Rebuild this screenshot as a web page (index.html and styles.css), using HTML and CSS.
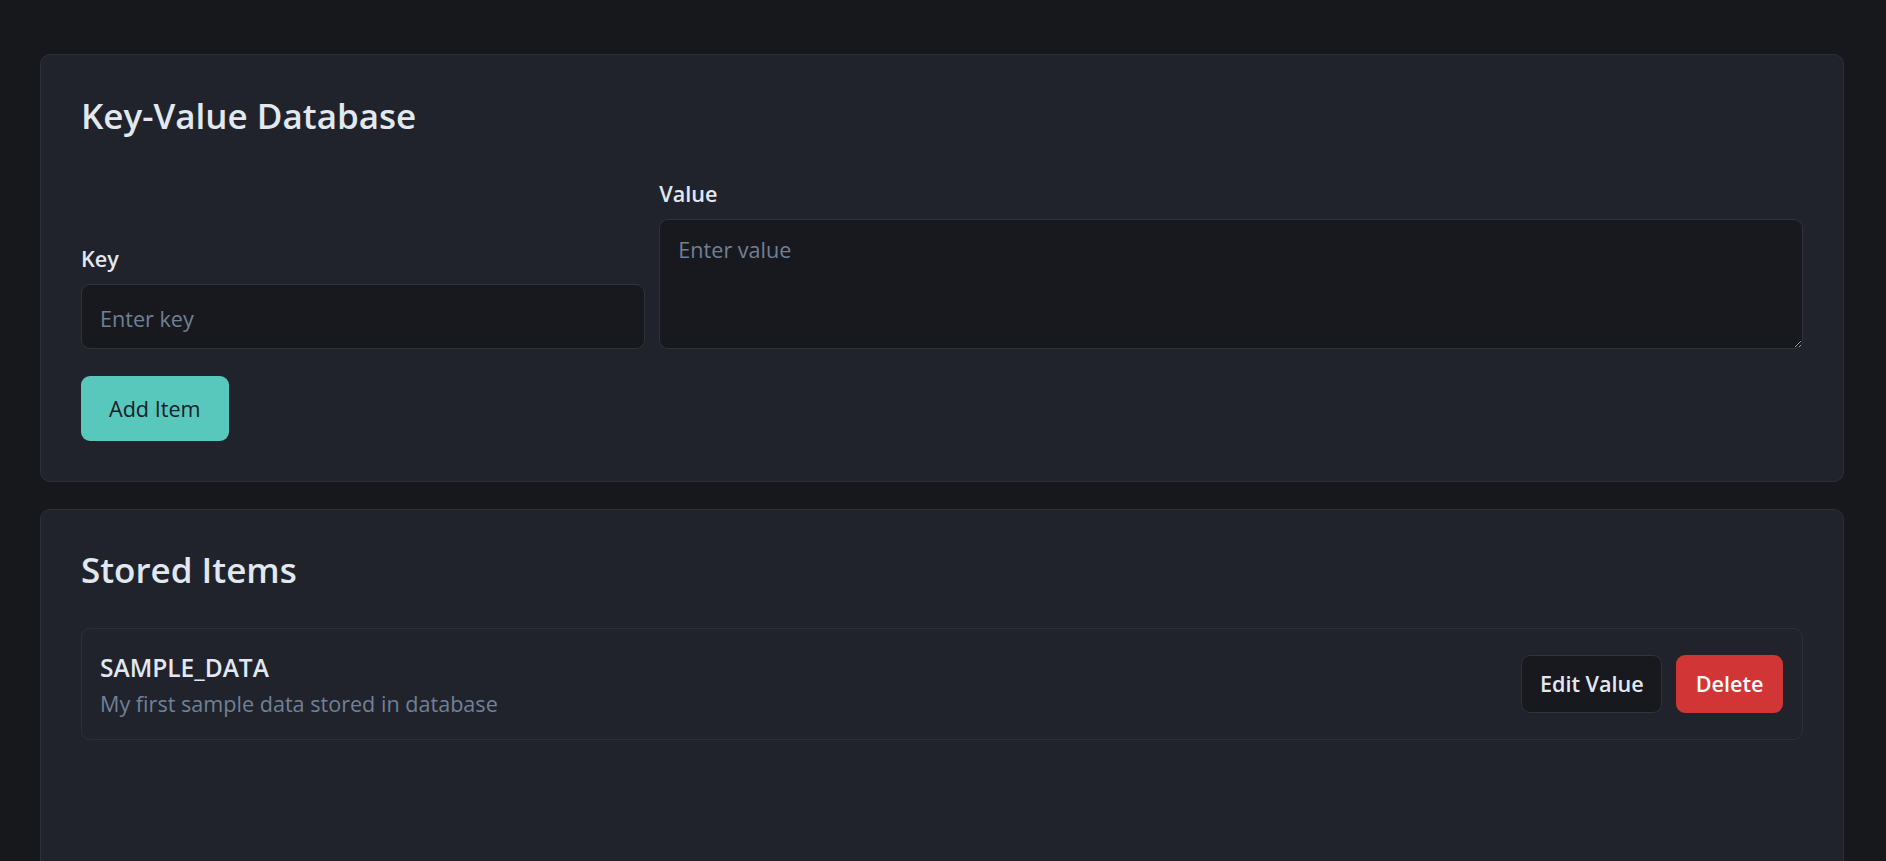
FILE: index.html
```html
<!DOCTYPE html>
<html lang="en">
<head>
<meta charset="utf-8">
<title>Key-Value Database</title>
<link rel="stylesheet" href="styles.css">
</head>
<body>
<main class="app">
  <section class="card">
    <h1 class="card-title">Key-Value Database</h1>
    <div class="form-row">
      <div class="field">
        <label class="field-label" for="key">Key</label>
        <input id="key" class="text-input" type="text" placeholder="Enter key">
      </div>
      <div class="field">
        <label class="field-label" for="value">Value</label>
        <textarea id="value" class="text-input text-area" placeholder="Enter value"></textarea>
      </div>
    </div>
    <div class="form-actions">
      <button class="btn btn-primary" type="button">Add Item</button>
    </div>
  </section>
  <section class="card card-list">
    <h2 class="card-title">Stored Items</h2>
    <div class="item">
      <div class="item-info">
        <div class="item-key">SAMPLE_DATA</div>
        <div class="item-value">My first sample data stored in database</div>
      </div>
      <div class="item-actions">
        <button class="btn btn-secondary" type="button">Edit Value</button>
        <button class="btn btn-danger" type="button">Delete</button>
      </div>
    </div>
  </section>
</main>
</body>
</html>
```

FILE: styles.css
```css
html, body {
  margin: 0;
  height: 100%;
  overflow: hidden;
  background: #17181c;
}

body {
  font-family: "Open Sans", "Noto Sans", sans-serif;
  color: #e2e8f0;
}

.app {
  box-sizing: border-box;
  height: 100%;
  padding: 54px 42px 0 40px;
  display: flex;
  flex-direction: column;
  gap: 27px;
}

.card {
  background: #20232b;
  border: 1px solid #2d3039;
  border-radius: 10px;
  padding: 40px;
}

.card-list {
  flex: 1 0 auto;
  min-height: 500px;
}

.card-title {
  margin: 0;
  font-size: 35px;
  font-weight: 600;
  line-height: 41px;
  color: #e2e8f0;
}

.form-row {
  display: grid;
  grid-template-columns: 564fr 1144fr;
  column-gap: 14.5px;
  align-items: end;
  margin-top: 43.3px;
}

.field {
  display: flex;
  flex-direction: column;
  gap: 10px;
}

.field-label {
  font-size: 21.6px;
  font-weight: 600;
  line-height: 30px;
  color: #e2e8f0;
}

.text-input {
  box-sizing: border-box;
  width: 100%;
  height: 65px;
  margin: 0;
  padding: 4px 18px 0;
  background: #18191e;
  border: 1px solid #30333b;
  border-radius: 9px;
  font-family: inherit;
  font-size: 21.6px;
  color: #e2e8f0;
  outline: none;
}

.text-input::placeholder {
  color: #718096;
  opacity: 1;
}

.text-area {
  display: block;
  height: 130px;
  padding: 14.5px 18px;
  line-height: 30px;
  resize: vertical;
  color-scheme: dark;
}

.form-actions {
  display: flex;
  margin-top: 26.7px;
}

.btn {
  box-sizing: border-box;
  margin: 0;
  border: 1px solid transparent;
  border-radius: 9px;
  font-family: inherit;
  font-size: 21.6px;
  cursor: pointer;
}

.btn-primary {
  height: 65px;
  padding: 0 27px;
  background: #57c8bb;
  color: #1a202c;
  font-weight: 500;
}

.card-list .card-title {
  margin-top: -1px;
  margin-bottom: 38px;
}

.item {
  display: flex;
  align-items: center;
  justify-content: space-between;
  border: 1px solid #2d3039;
  border-radius: 9px;
  padding: 19px 19px 19px 18px;
}

.item-key {
  font-size: 24.5px;
  font-weight: 600;
  line-height: 39.4px;
  margin-bottom: 1.8px;
  color: #e2e8f0;
}

.item-value {
  font-size: 21.6px;
  line-height: 30.4px;
  color: #718096;
}

.item-actions {
  display: flex;
  gap: 14px;
}

.btn-secondary {
  height: 58px;
  padding: 0 17.5px;
  background: #18191e;
  border-color: #30333b;
  color: #e2e8f0;
  font-weight: 600;
}

.btn-danger {
  height: 58px;
  padding: 0 18.5px;
  background: #d13535;
  color: #ffffff;
  font-weight: 600;
}
```
